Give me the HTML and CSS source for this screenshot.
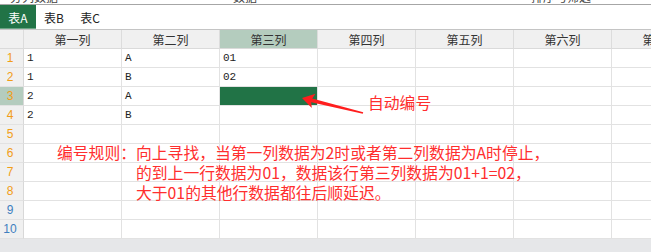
FILE: index.html
```html
<!DOCTYPE html>
<html>
<head>
<meta charset="utf-8">
<link rel="stylesheet" href="styles.css">
</head>
<body>
<div class="app">
  <div class="ribbon">
    <span class="rb rb1">分列数据</span>
    <span class="rb rb2">数据</span>
    <span class="rb rb3">排序与筛选</span>
  </div>
  <div class="tabs">
    <div class="tab active">表A</div>
    <div class="tab">表B</div>
    <div class="tab">表C</div>
  </div>
  <div class="sheet">
    <div class="grid">
      <div class="hd corner"></div>
      <div class="hd">第一列</div>
      <div class="hd">第二列</div>
      <div class="hd sel">第三列</div>
      <div class="hd">第四列</div>
      <div class="hd">第五列</div>
      <div class="hd">第六列</div>
      <div class="hd">第七列</div>

      <div class="rn">1</div><div class="c">1</div><div class="c">A</div><div class="c">01</div><div class="c"></div><div class="c"></div><div class="c"></div><div class="c"></div>
      <div class="rn">2</div><div class="c">1</div><div class="c">B</div><div class="c">02</div><div class="c"></div><div class="c"></div><div class="c"></div><div class="c"></div>
      <div class="rn sel">3</div><div class="c">2</div><div class="c">A</div><div class="c active"></div><div class="c"></div><div class="c"></div><div class="c"></div><div class="c"></div>
      <div class="rn">4</div><div class="c">2</div><div class="c">B</div><div class="c"></div><div class="c"></div><div class="c"></div><div class="c"></div><div class="c"></div>
      <div class="rn">5</div><div class="c"></div><div class="c"></div><div class="c"></div><div class="c"></div><div class="c"></div><div class="c"></div><div class="c"></div>
      <div class="rn">6</div><div class="c"></div><div class="c"></div><div class="c"></div><div class="c"></div><div class="c"></div><div class="c"></div><div class="c"></div>
      <div class="rn">7</div><div class="c"></div><div class="c"></div><div class="c"></div><div class="c"></div><div class="c"></div><div class="c"></div><div class="c"></div>
      <div class="rn">8</div><div class="c"></div><div class="c"></div><div class="c"></div><div class="c"></div><div class="c"></div><div class="c"></div><div class="c"></div>
      <div class="rn blue">9</div><div class="c"></div><div class="c"></div><div class="c"></div><div class="c"></div><div class="c"></div><div class="c"></div><div class="c"></div>
      <div class="rn blue">10</div><div class="c"></div><div class="c"></div><div class="c"></div><div class="c"></div><div class="c"></div><div class="c"></div><div class="c"></div>
    </div>

    <svg class="arrow" width="651" height="210" viewBox="0 0 651 210">
      <polygon points="302,68 315.5,63.8 312.2,68.6 363.2,82.3 362.8,83.7 311.2,72.3 311.8,78" fill="#ff1e1e"/>
    </svg>
    <div class="note-auto">自动编号</div>
    <div class="note-rule">
      <span class="lbl">编号规则：</span>
      <div class="body">向上寻找，当第一列数据为2时或者第二列数据为A时停止，<br>的到上一行数据为01，数据该行第三列数据为01+1=02，<br>大于01的其他行数据都往后顺延迟。</div>
    </div>
  </div>
  <div class="status"></div>
</div>
</body>
</html>
```

FILE: styles.css
```css
html, body {
  margin: 0;
  padding: 0;
  background: #ffffff;
  overflow: hidden;
}
.app {
  width: 651px;
  height: 252px;
  overflow: hidden;
  display: flex;
  flex-direction: column;
  font-family: "Liberation Mono", "Noto Sans CJK SC", monospace;
}
.ribbon {
  height: 4px;
  border-bottom: 1px solid #a6a6a6;
  overflow: hidden;
  display: flex;
  font-family: "Noto Sans CJK SC", sans-serif;
  font-size: 12px;
  color: #444;
  flex: none;
}
.rb {
  display: block;
  line-height: 12px;
  margin-top: -9px;
}
.rb1 { margin-left: 10px; }
.rb2 { margin-left: 175px; }
.rb3 { margin-left: 274px; }
.tabs {
  height: 24px;
  display: flex;
  flex: none;
  background: #fff;
}
.tab {
  width: 36px;
  display: flex;
  align-items: center;
  justify-content: center;
  font-size: 12px;
  font-family: "Noto Sans CJK SC", sans-serif;
  color: #222;
}
.tab.active {
  background: #217346;
  color: #ffffff;
  box-shadow: inset 0 -1px 0 #6aa584;
}
.sheet {
  position: relative;
  flex: none;
  border-top: 1px solid #c4c4c4;
}
.grid {
  display: grid;
  grid-template-columns: 24px repeat(7, 98px);
  grid-auto-rows: 19px;
  width: 710px;
}
.grid > div {
  box-sizing: border-box;
  border-right: 1px solid #e2e2e2;
  border-bottom: 1px solid #e2e2e2;
  overflow: hidden;
  white-space: nowrap;
}
.hd {
  background: #f0f0f0;
  font-family: "Noto Sans CJK SC", sans-serif;
  font-size: 12px;
  color: #333;
  display: flex;
  align-items: center;
  justify-content: center;
  border-right-color: #dcdcdc !important;
  border-bottom-color: #dadada !important;
}
.hd.sel {
  background: #b4ccbe;
}
.rn {
  background: #f0f0f0;
  font-family: "Liberation Sans", sans-serif;
  font-size: 12px;
  color: #f29d16;
  display: flex;
  align-items: center;
  justify-content: center;
  padding-right: 3px;
  border-right-color: #d8d8d8 !important;
}
.rn.sel {
  background: #b4ccbe;
}
.rn.blue {
  color: #3f7fbf;
}
.c {
  font-size: 11px;
  color: #222;
  padding-left: 3px;
  line-height: 18px;
  background: #fff;
}
.c.active {
  background: #217346;
}
.arrow {
  position: absolute;
  left: 0;
  top: 0;
}
.note-auto {
  position: absolute;
  left: 368px;
  top: 63px;
  font-family: "Noto Sans CJK SC", sans-serif;
  font-size: 15.8px;
  line-height: 20px;
  color: #ff2e2e;
}
.note-rule {
  position: absolute;
  left: 57px;
  top: 113px;
  display: flex;
  font-family: "Noto Sans CJK SC", sans-serif;
  font-size: 15.8px;
  line-height: 20px;
  color: #ff2e2e;
  white-space: nowrap;
}
.status {
  flex: 1;
  background: #e6e7e9;
}
```
